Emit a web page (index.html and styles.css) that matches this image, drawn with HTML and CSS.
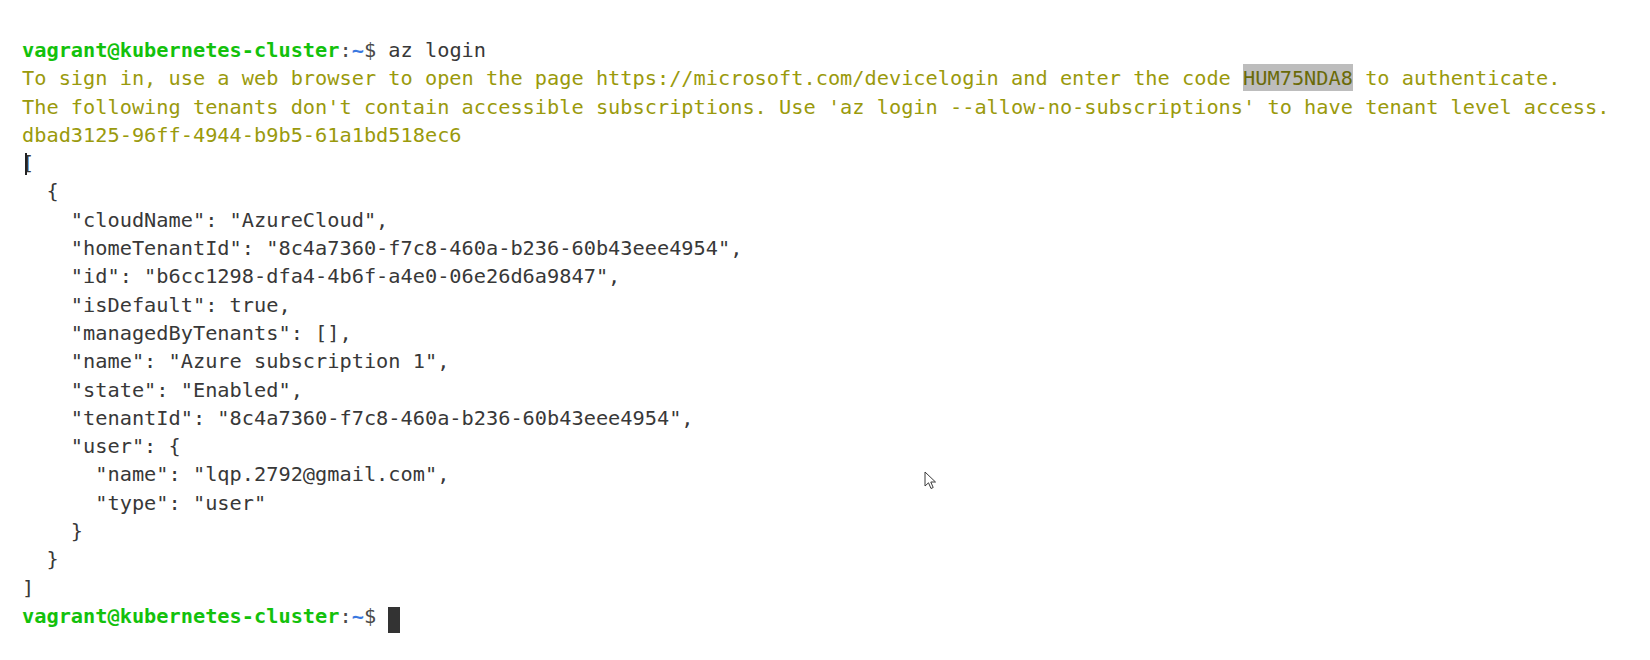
FILE: index.html
```html
<!DOCTYPE html>
<html lang="en">
<head>
    <meta charset="UTF-8">
    <title>vagrant@kubernetes-cluster: ~</title>
    <link rel="stylesheet" href="styles.css">
</head>
<body>
    <div class="terminal">
<div class="line"><span class="user">vagrant@kubernetes-cluster</span><span class="sep">:</span><span class="path">~</span><span class="sep">$ </span>az login</div>
<div class="line warn">To sign in, use a web browser to open the page https://microsoft.com/devicelogin and enter the code <span class="selected">HUM75NDA8</span> to authenticate.</div>
<div class="line warn">The following tenants don't contain accessible subscriptions. Use 'az login --allow-no-subscriptions' to have tenant level access.</div>
<div class="line warn">dbad3125-96ff-4944-b9b5-61a1bd518ec6</div>
<div class="line"><span class="ibeam-host">[<span class="ibeam"></span></span></div>
<div class="line">  {</div>
<div class="line">    "cloudName": "AzureCloud",</div>
<div class="line">    "homeTenantId": "8c4a7360-f7c8-460a-b236-60b43eee4954",</div>
<div class="line">    "id": "b6cc1298-dfa4-4b6f-a4e0-06e26d6a9847",</div>
<div class="line">    "isDefault": true,</div>
<div class="line">    "managedByTenants": [],</div>
<div class="line">    "name": "Azure subscription 1",</div>
<div class="line">    "state": "Enabled",</div>
<div class="line">    "tenantId": "8c4a7360-f7c8-460a-b236-60b43eee4954",</div>
<div class="line">    "user": {</div>
<div class="line">      "name": "lqp.2792@gmail.com",</div>
<div class="line">      "type": "user"</div>
<div class="line">    }</div>
<div class="line">  }</div>
<div class="line">]</div>
<div class="line"><span class="user">vagrant@kubernetes-cluster</span><span class="sep">:</span><span class="path">~</span><span class="sep">$ </span><span class="cursor"> </span></div>
    </div>

    <!-- mouse pointer left over the window -->
    <svg class="pointer" width="14" height="20" viewBox="0 0 14 20">
        <path d="M1 1 L1 15 L4.5 11.8 L7 17.5 L9.2 16.5 L6.8 11 L11.5 11 Z" fill="#fff" stroke="#3a3a3a" stroke-width="1" stroke-linejoin="round"/>
    </svg>
</body>
</html>
```

FILE: styles.css
```css
* {
    margin: 0;
    padding: 0;
    box-sizing: border-box;
}

body {
    background: #ffffff;
    width: 1650px;
    height: 660px;
    overflow: hidden;
    position: relative;
}

.terminal {
    padding: 36px 0 0 22px;
    font-family: 'DejaVu Sans Mono', 'Liberation Mono', monospace;
    font-size: 20.3px;
    line-height: 28.3px;
    color: #383838;
}

.line {
    white-space: pre;
    height: 28.3px;
}

.user {
    color: #13c10c;
    font-weight: bold;
}

.sep {
    color: #4a4a4a;
}

.path {
    color: #3a78e0;
    font-weight: bold;
}

.warn {
    color: #9a9a0c;
}

.selected {
    background: #bdbdbd;
    color: #6a6a08;
    display: inline-block;
    height: 27px;
}

.cursor {
    display: inline-block;
    width: 12px;
    height: 26px;
    vertical-align: -5px;
    background: #333333;
}

/* I-beam text cursor sitting on the bracket */
.ibeam-host {
    position: relative;
}

.ibeam {
    position: absolute;
    left: 3px;
    top: 2px;
    width: 6px;
    height: 22px;
    border-left: 2px solid #222;
}

.pointer {
    position: absolute;
    left: 924px;
    top: 471px;
}
```
